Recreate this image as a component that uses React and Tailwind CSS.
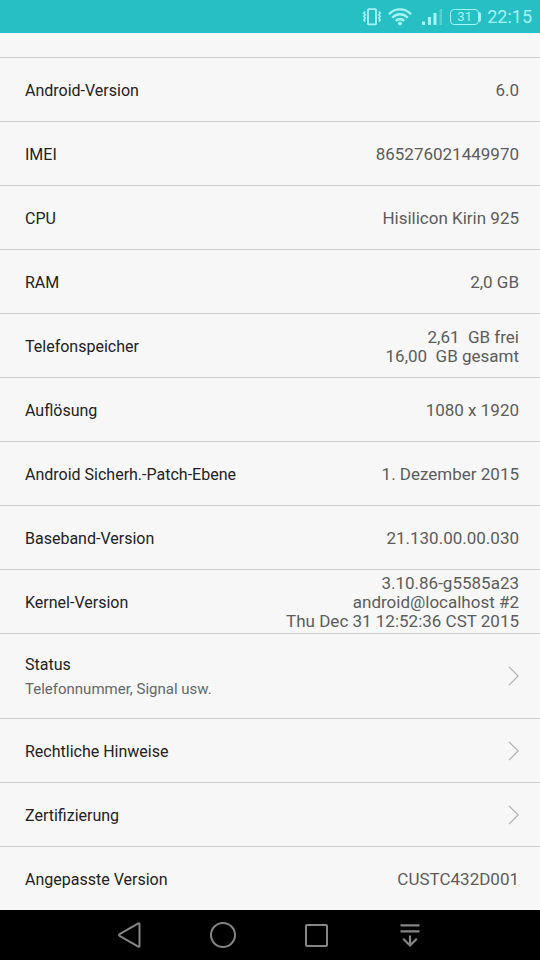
import React from "react";

const infoRows = [
  { label: "Android-Version", lines: ["6.0"] },
  { label: "IMEI", lines: ["865276021449970"] },
  { label: "CPU", lines: ["Hisilicon Kirin 925"] },
  { label: "RAM", lines: ["2,0 GB"] },
  { label: "Telefonspeicher", lines: ["2,61  GB frei", "16,00  GB gesamt"] },
  { label: "Auflösung", lines: ["1080 x 1920"] },
  { label: "Android Sicherh.-Patch-Ebene", lines: ["1. Dezember 2015"] },
  { label: "Baseband-Version", lines: ["21.130.00.00.030"] },
  {
    label: "Kernel-Version",
    lines: ["3.10.86-g5585a23", "android@localhost #2", "Thu Dec 31 12:52:36 CST 2015"],
  },
  { label: "Status", summary: "Telefonnummer, Signal usw.", link: true },
  { label: "Rechtliche Hinweise", link: true },
  { label: "Zertifizierung", link: true },
  { label: "Angepasste Version", lines: ["CUSTC432D001"] },
];

function StatusBar() {
  return (
    <header className="flex h-[33px] shrink-0 items-center justify-end bg-[#26bfc3] pr-2 text-[#a5f5f5]">
      {/* vibrate */}
      <svg className="mr-1.5" width="20" height="18" viewBox="0 0 20 18" fill="none" stroke="currentColor" strokeWidth="1.8">
        <rect x="6" y="1.2" width="8" height="15.2" rx="0.6" />
        <path d="M3.2 3.5 1.8 5l1.4 1.7-1.4 1.7 1.4 1.7-1.4 1.7 1.4 1.7M16.8 3.5 18.2 5l-1.4 1.7 1.4 1.7-1.4 1.7 1.4 1.7-1.4 1.7" strokeWidth="1.6" />
      </svg>
      {/* wifi */}
      <svg className="mr-2.5" width="24" height="18" viewBox="0 0 24 18" fill="none" stroke="currentColor" strokeWidth="2.4">
        <path d="M1 6.2C7-.2 17-.2 23 6.2M4.3 9.7c4.2-4.6 11.2-4.6 15.4 0M7.8 13c2.3-2.6 6.1-2.6 8.4 0" />
        <circle cx="12" cy="15.4" r="2" fill="currentColor" stroke="none" />
      </svg>
      {/* signal */}
      <svg className="mr-2" width="20" height="18" viewBox="0 0 20 18" fill="currentColor">
        <rect x="0" y="13.5" width="3" height="3.5" />
        <rect x="6" y="9" width="3" height="8" />
        <rect x="11.5" y="5" width="3" height="12" />
        <rect x="17.5" y="1" width="2.5" height="16" opacity="0.35" />
      </svg>
      <div className="mr-1.5 flex items-center">
        <span className="flex h-4 w-[29px] items-center justify-center rounded-sm border border-current text-[13px]">31</span>
        <span className="h-2.5 w-0.5 rounded-r-sm bg-current" />
      </div>
      <time className="text-lg">22:15</time>
    </header>
  );
}

function Chevron() {
  return (
    <svg className="shrink-0" width="11" height="20" viewBox="0 0 11 20" fill="none" stroke="#b0b0b0" strokeWidth="1.2">
      <path d="M1 .8 10.2 10 1 19.2" />
    </svg>
  );
}

function Row({ row }) {
  if (row.link) {
    return (
      <li className="border-b border-[#cccccc]">
        <button
          type="button"
          className={`flex w-full items-center justify-between pr-[21px] pl-[25px] text-left ${row.summary ? "h-[84px]" : "h-[63px]"}`}
        >
          <span className="flex flex-col gap-1 pt-0.5">
            <span className="text-base leading-5 text-[#222222]">{row.label}</span>
            {row.summary && <span className="text-[15px] leading-5 text-[#666666]">{row.summary}</span>}
          </span>
          <Chevron />
        </button>
      </li>
    );
  }

  return (
    <li className="border-b border-[#cccccc] last:border-b-0">
      <div className="flex min-h-[63px] items-center justify-between pr-[21px] pl-[25px]">
        <span className="pt-0.5 text-base leading-5 text-[#222222]">{row.label}</span>
        <span className="pt-0.5 text-right text-[17px] leading-[19px] whitespace-pre text-[#5c5c5c]">
          {row.lines.map((line) => (
            <span key={line} className="block">{line}</span>
          ))}
        </span>
      </div>
    </li>
  );
}

function NavBar() {
  const button = "flex h-full w-[94px] items-center justify-center";

  return (
    <nav className="flex h-[50px] shrink-0 justify-center bg-black text-[#858585]">
      <button type="button" aria-label="Zurück" className={button}>
        <svg width="28" height="28" viewBox="0 0 28 28" fill="none" stroke="currentColor" strokeWidth="2" strokeLinejoin="round">
          <path d="M24.5 3v22a.8.8 0 0 1-1.2.7L4.6 14.8a.9.9 0 0 1 0-1.6L23.3 2.3a.8.8 0 0 1 1.2.7Z" />
        </svg>
      </button>
      <button type="button" aria-label="Startseite" className={button}>
        <svg width="28" height="28" viewBox="0 0 28 28" fill="none" stroke="currentColor" strokeWidth="2">
          <circle cx="14" cy="14" r="12" />
        </svg>
      </button>
      <button type="button" aria-label="Letzte Apps" className={button}>
        <svg width="28" height="28" viewBox="0 0 28 28" fill="none" stroke="currentColor" strokeWidth="2">
          <rect x="3" y="4" width="21" height="21" rx="1" />
        </svg>
      </button>
      <button type="button" aria-label="Benachrichtigungen" className={button}>
        <svg width="28" height="28" viewBox="0 0 28 28" fill="none" stroke="currentColor" strokeWidth="2.2">
          <path d="M3.5 4.3h19M3.5 10.3h19M13 14.5v10M6.2 17.8l6.8 6.7 6.8-6.7" />
        </svg>
      </button>
    </nav>
  );
}

export default function App() {
  return (
    <div className="flex min-h-screen flex-col bg-[#f7f7f7] font-['Roboto',sans-serif]">
      <StatusBar />
      <main className="flex-1">
        <ul className="mt-6 border-t border-[#cccccc]">
          {infoRows.map((row) => (
            <Row key={row.label} row={row} />
          ))}
        </ul>
      </main>
      <NavBar />
    </div>
  );
}
